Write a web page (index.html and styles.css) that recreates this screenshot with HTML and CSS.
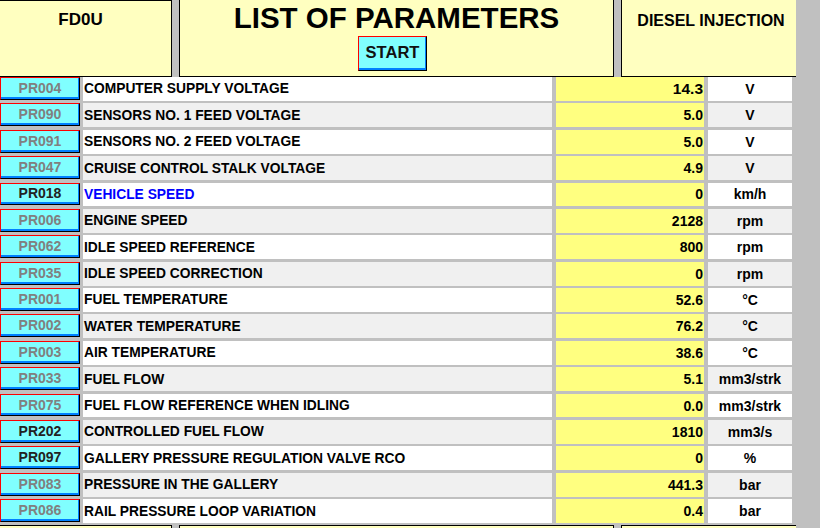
FILE: index.html
```html
<!DOCTYPE html>
<html lang="en">
<head>
    <meta charset="UTF-8">
    <title>List of parameters</title>
    <link rel="stylesheet" href="styles.css">
</head>
<body>
    <div class="header">
        <div class="box box-left"><span class="ecu">FD0U</span></div>
        <div class="box box-mid">
            <h1>LIST OF PARAMETERS</h1>
            <button class="btn start">START</button>
        </div>
        <div class="box box-right"><span class="system">DIESEL INJECTION</span></div>
    </div>

    <div class="params">
        <div class="row"><div class="btn code">PR004</div><div class="desc">COMPUTER SUPPLY VOLTAGE</div><div class="val big">14.3</div><div class="unit">V</div></div>
        <div class="row"><div class="btn code">PR090</div><div class="desc">SENSORS NO. 1 FEED VOLTAGE</div><div class="val">5.0</div><div class="unit">V</div></div>
        <div class="row"><div class="btn code">PR091</div><div class="desc">SENSORS NO. 2 FEED VOLTAGE</div><div class="val">5.0</div><div class="unit">V</div></div>
        <div class="row"><div class="btn code">PR047</div><div class="desc">CRUISE CONTROL STALK VOLTAGE</div><div class="val">4.9</div><div class="unit">V</div></div>
        <div class="row"><div class="btn code active">PR018</div><div class="desc selected">VEHICLE SPEED</div><div class="val">0</div><div class="unit">km/h</div></div>
        <div class="row"><div class="btn code">PR006</div><div class="desc">ENGINE SPEED</div><div class="val">2128</div><div class="unit">rpm</div></div>
        <div class="row"><div class="btn code">PR062</div><div class="desc">IDLE SPEED REFERENCE</div><div class="val">800</div><div class="unit">rpm</div></div>
        <div class="row"><div class="btn code">PR035</div><div class="desc">IDLE SPEED CORRECTION</div><div class="val">0</div><div class="unit">rpm</div></div>
        <div class="row"><div class="btn code">PR001</div><div class="desc">FUEL TEMPERATURE</div><div class="val">52.6</div><div class="unit">°C</div></div>
        <div class="row"><div class="btn code">PR002</div><div class="desc">WATER TEMPERATURE</div><div class="val">76.2</div><div class="unit">°C</div></div>
        <div class="row"><div class="btn code">PR003</div><div class="desc">AIR TEMPERATURE</div><div class="val">38.6</div><div class="unit">°C</div></div>
        <div class="row"><div class="btn code">PR033</div><div class="desc">FUEL FLOW</div><div class="val">5.1</div><div class="unit">mm3/strk</div></div>
        <div class="row"><div class="btn code">PR075</div><div class="desc">FUEL FLOW REFERENCE WHEN IDLING</div><div class="val">0.0</div><div class="unit">mm3/strk</div></div>
        <div class="row"><div class="btn code active">PR202</div><div class="desc">CONTROLLED FUEL FLOW</div><div class="val">1810</div><div class="unit">mm3/s</div></div>
        <div class="row"><div class="btn code active">PR097</div><div class="desc">GALLERY PRESSURE REGULATION VALVE RCO</div><div class="val">0</div><div class="unit">%</div></div>
        <div class="row"><div class="btn code">PR083</div><div class="desc">PRESSURE IN THE GALLERY</div><div class="val">441.3</div><div class="unit">bar</div></div>
        <div class="row"><div class="btn code">PR086</div><div class="desc">RAIL PRESSURE LOOP VARIATION</div><div class="val">0.4</div><div class="unit">bar</div></div>
    </div>

    <div class="footer">
        <div class="box box-left"></div>
        <div class="box box-mid"></div>
        <div class="box box-right"></div>
    </div>
</body>
</html>
```

FILE: styles.css
```css
html, body {
    margin: 0;
    height: 528px;
    overflow: hidden;
}
body {
    background: #c0c0c0;
    font-family: 'Liberation Sans', Arial, sans-serif;
    font-weight: bold;
    color: #000;
}

/* Kopfzeile */
.header, .footer {
    display: flex;
    column-gap: 7px;
}
.header .box {
    height: 77px;
    border-bottom: 1px solid #000;
}
.box {
    box-sizing: border-box;
    background: #ffffc0;
    text-align: center;
}
.box-left {
    width: 172px;
    border-right: 1px solid #000;
}
.box-mid {
    width: 435px;
    border-left: 1px solid #000;
    border-right: 1px solid #000;
}
.box-right {
    width: 175px;
    border-left: 1px solid #000;
}
.header .box-left {
    border-top: 1px solid #000;
    padding-top: 9px;
}
.header .box-mid {
    padding-top: 3px;
}
.header .box-right {
    padding-top: 11px;
}
.ecu {
    display: block;
    font-size: 17px;
    line-height: 20px;
    padding-right: 10px;
}
.system {
    display: block;
    font-size: 16px;
    line-height: 20px;
    padding-left: 4px;
}
h1 {
    margin: 0;
    font-size: 29.5px;
    line-height: 29px;
}

/* 3D Knöpfe */
.btn {
    box-sizing: border-box;
    background: #80ffff;
    border: 1px solid;
    border-color: #ff0000 #000 #000 #ff0000;
    box-shadow: inset -1px -2px 0 #0080ff;
    font-family: inherit;
    font-weight: bold;
}
.start {
    display: block;
    margin: 4px auto 0;
    width: 69px;
    height: 35px;
    padding: 0 0 2px;
    font-size: 16.5px;
    color: #111;
    position: relative;
    left: -4px;
}

/* Parameterliste */
.params {
    display: grid;
    grid-template-rows: repeat(17, 1fr);
    row-gap: 2.5px;
    height: 446px;
}
.row {
    display: flex;
    font-size: 14px;
}
.row > div {
    display: flex;
    align-items: center;
}
.code {
    width: 80px;
    margin: 0 3px 1px 0;
    justify-content: center;
    padding-bottom: 1px;
    font-size: 14px;
    color: #808080;
}
.code.active {
    color: #222;
}
.desc {
    width: 469px;
    margin-right: 4px;
    padding-left: 1px;
    box-sizing: border-box;
    background: #fff;
    font-size: 13.8px;
}
.desc.selected {
    color: #0000ff;
}
.val {
    width: 148px;
    margin-right: 4px;
    justify-content: flex-end;
    padding-right: 1px;
    box-sizing: border-box;
    background: #ffff80;
}
.val.big {
    font-size: 15.5px;
}
.unit {
    width: 84px;
    justify-content: center;
    background: #fff;
}
.row:nth-child(even) .desc,
.row:nth-child(even) .unit {
    background: #f0f0f0;
}

/* Fußzeile, abgeschnitten */
.footer {
    margin-top: 2px;
}
.footer .box {
    height: 20px;
    border-top: 1px solid #000;
}
```
